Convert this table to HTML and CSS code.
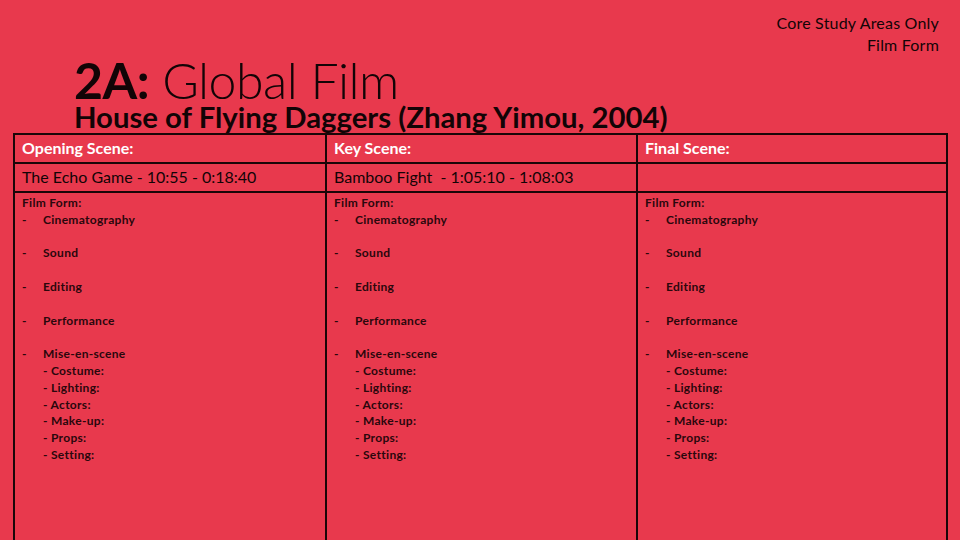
FILE: index.html
```html
<!DOCTYPE html>
<html lang="en">
<head>
<meta charset="utf-8">
<title>2A: Global Film</title>
<link rel="stylesheet" href="styles.css">
</head>
<body>
<div class="slide">
  <header class="head">
    <div class="titles">
      <h1 class="title"><b>2A:</b> Global Film</h1>
      <h2 class="subtitle">House of Flying Daggers (Zhang Yimou, 2004)</h2>
    </div>
    <div class="note">Core Study Areas Only<br>Film Form</div>
  </header>
  <table class="grid">
    <colgroup><col class="c1"><col class="c2"><col class="c3"></colgroup>
    <tr class="hrow">
      <th>Opening Scene:</th>
      <th>Key Scene:</th>
      <th>Final Scene:</th>
    </tr>
    <tr class="trow">
      <td>The Echo Game - 10:55 - 0:18:40</td>
      <td>Bamboo Fight&nbsp; - 1:05:10 - 1:08:03</td>
      <td></td>
    </tr>
    <tr class="brow">
      <td>
        <div class="form">
          <p class="ff">Film Form:</p>
          <p class="item"><span class="dash">-</span><span>Cinematography</span></p>
          <p class="item"><span class="dash">-</span><span>Sound</span></p>
          <p class="item"><span class="dash">-</span><span>Editing</span></p>
          <p class="item"><span class="dash">-</span><span>Performance</span></p>
          <p class="item"><span class="dash">-</span><span>Mise-en-scene<br>- Costume:<br>- Lighting:<br>- Actors:<br>- Make-up:<br>- Props:<br>- Setting:</span></p>
        </div>
      </td>
      <td>
        <div class="form">
          <p class="ff">Film Form:</p>
          <p class="item"><span class="dash">-</span><span>Cinematography</span></p>
          <p class="item"><span class="dash">-</span><span>Sound</span></p>
          <p class="item"><span class="dash">-</span><span>Editing</span></p>
          <p class="item"><span class="dash">-</span><span>Performance</span></p>
          <p class="item"><span class="dash">-</span><span>Mise-en-scene<br>- Costume:<br>- Lighting:<br>- Actors:<br>- Make-up:<br>- Props:<br>- Setting:</span></p>
        </div>
      </td>
      <td>
        <div class="form">
          <p class="ff">Film Form:</p>
          <p class="item"><span class="dash">-</span><span>Cinematography</span></p>
          <p class="item"><span class="dash">-</span><span>Sound</span></p>
          <p class="item"><span class="dash">-</span><span>Editing</span></p>
          <p class="item"><span class="dash">-</span><span>Performance</span></p>
          <p class="item"><span class="dash">-</span><span>Mise-en-scene<br>- Costume:<br>- Lighting:<br>- Actors:<br>- Make-up:<br>- Props:<br>- Setting:</span></p>
        </div>
      </td>
    </tr>
  </table>
</div>
</body>
</html>
```
FILE: styles.css
```css
* { box-sizing: border-box; }
html, body {
  margin: 0;
  padding: 0;
  width: 960px;
  height: 540px;
  overflow: hidden;
  background: #e8394d;
}
.slide {
  width: 960px;
  height: 540px;
  overflow: hidden;
  font-family: Lato, "Open Sans", sans-serif;
  color: #120406;
}
.head {
  height: 133px;
  display: flex;
  justify-content: space-between;
  align-items: flex-start;
}
.titles {
  padding-left: 74px;
  padding-top: 58px;
}
.title {
  margin: 0;
  font-size: 50px;
  line-height: 44px;
  font-weight: 300;
  letter-spacing: -0.5px;
}
.title b { font-weight: 700; }
.subtitle {
  margin: 0;
  font-size: 29.3px;
  line-height: 30px;
  font-weight: 700;
  white-space: nowrap;
}
.note {
  padding-top: 12px;
  padding-right: 21px;
  text-align: right;
  font-size: 16px;
  line-height: 22px;
  letter-spacing: 0.2px;
}
.grid {
  margin-left: 13px;
  width: 933px;
  border-collapse: collapse;
  table-layout: fixed;
}
.c1 { width: 312px; }
.c2 { width: 311px; }
.c3 { width: 310px; }
.grid th, .grid td {
  border: 2px solid #1a0608;
  padding: 0 0 0 7px;
  text-align: left;
  vertical-align: top;
}
.hrow th {
  height: 29px;
  padding-bottom: 2px;
  color: #ffffff;
  font-size: 16px;
  font-weight: 700;
  vertical-align: middle;
}
.trow td {
  height: 29px;
  padding-bottom: 2px;
  font-size: 16px;
  vertical-align: middle;
}
.brow td {
  height: 420px;
  padding-top: 2px;
}
.form {
  font-size: 12px;
  line-height: 16.8px;
  font-weight: 700;
  letter-spacing: 0.3px;
  color: #2a070c;
}
.form p { margin: 0; }
.item {
  display: flex;
  margin-bottom: 16.8px !important;
}
.dash { width: 21px; flex: none; }
```
